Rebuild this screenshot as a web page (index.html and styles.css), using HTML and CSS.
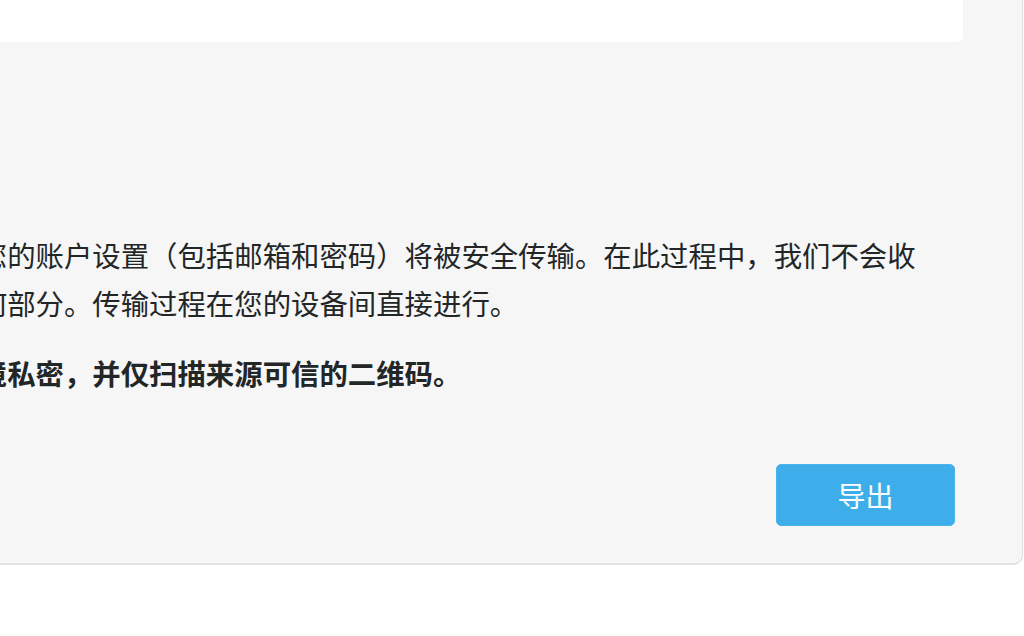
FILE: index.html
```html
<!DOCTYPE html>
<html lang="zh-CN">
<head>
    <meta charset="utf-8">
    <title>导出账户</title>
    <link rel="stylesheet" href="styles.css">
</head>
<body>
    <div class="dialog">
        <div class="preview"></div>

        <div class="content">
            <p class="info">扫描二维码后，您的账户设置（包括邮箱和密码）将被安全传输。在此过程中，我们不会收集您数据中的任何部分。传输过程在您的设备间直接进行。</p>
            <p class="warning">请确保您周围环境私密，并仅扫描来源可信的二维码。</p>
        </div>

        <div class="actions">
            <button class="export-button">导出</button>
        </div>
    </div>
</body>
</html>
```

FILE: styles.css
```css
body {
    margin: 0;
    background-color: #ffffff;
    overflow: hidden;
    font-family: "Noto Sans CJK SC", "Noto Sans", sans-serif;
    color: #232627;
}

.dialog {
    margin: -100px 1px 0 -260px;
    padding: 0 59px 0 40px;
    background-color: #f6f6f6;
    border-right: 1px solid #dedede;
    border-bottom: 2px solid #e2e2e4;
    border-radius: 0 0 10px 10px;
}

.preview {
    height: 142px;
    background-color: #ffffff;
    border-radius: 0 0 6px 6px;
}

.content {
    padding: 189px 30px 0 0;
}

.content p {
    margin: 0;
    font-size: 28.4px;
    line-height: 48px;
}

.content .warning {
    margin-top: 22px;
    font-weight: 700;
}

.actions {
    display: flex;
    justify-content: flex-end;
    padding: 67px 8px 37px 0;
}

.export-button {
    width: 179px;
    height: 62px;
    border: 1px solid #4bb4ea;
    border-radius: 5px;
    background-color: #3daee9;
    color: #ffffff;
    font-family: "Noto Sans CJK SC", "Noto Sans", sans-serif;
    font-size: 28px;
    cursor: pointer;
}
```
